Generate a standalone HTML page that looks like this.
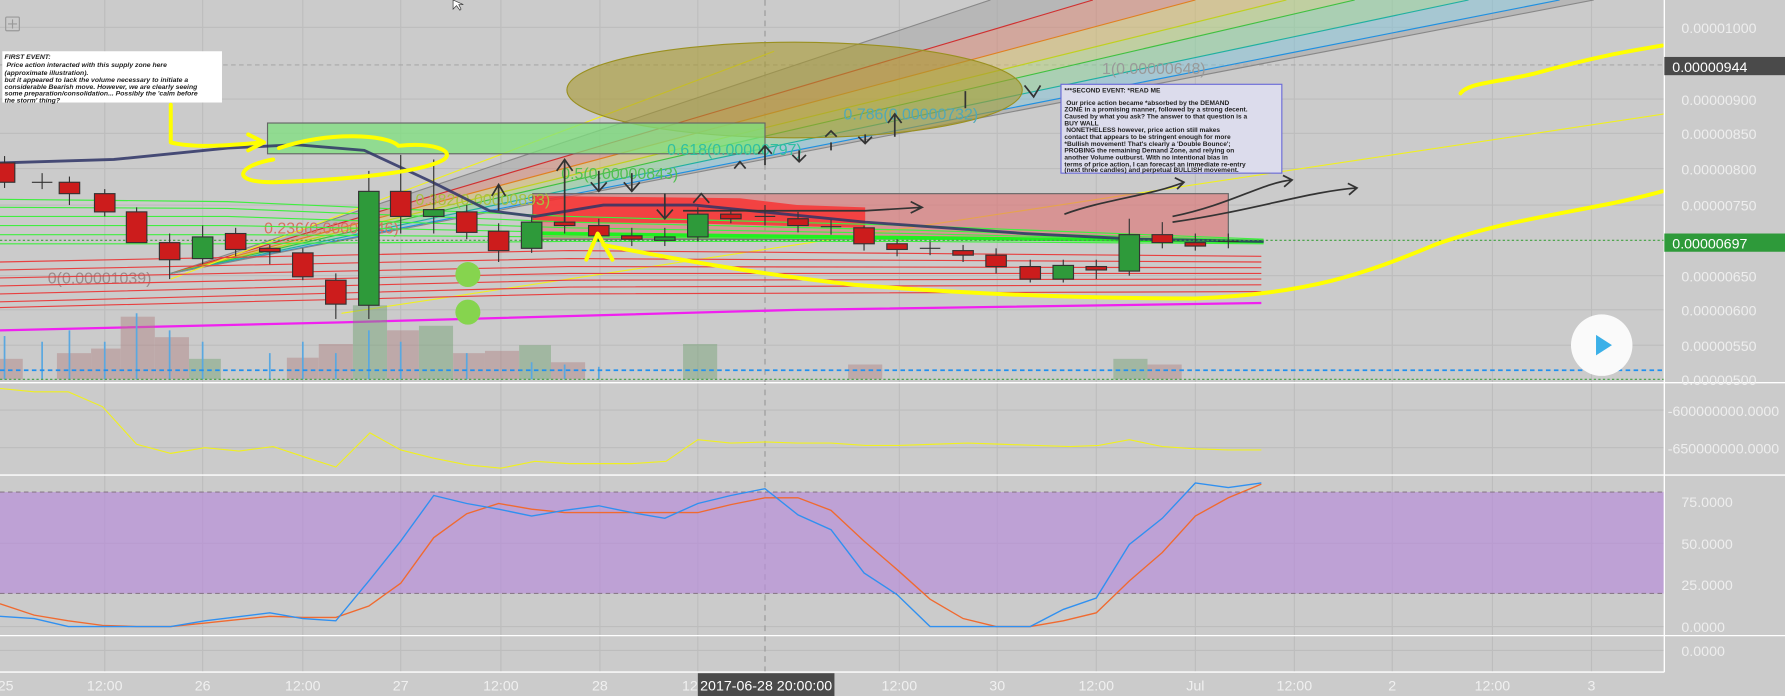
<!DOCTYPE html>
<html><head><meta charset="utf-8"><style>
html,body{margin:0;padding:0;background:#cbcbcb;overflow:hidden}
svg{display:block}
text{font-family:"Liberation Sans",sans-serif}
</style></head><body>
<svg width="1785" height="696" viewBox="0 0 1568 611" preserveAspectRatio="none" xmlns="http://www.w3.org/2000/svg">
<rect width="1568" height="611" fill="#cbcbcb"/>
<!-- grid -->
<g stroke="#bdbdbd" stroke-width="1">
<line x1="92" y1="0" x2="92" y2="590"/><line x1="178" y1="0" x2="178" y2="590"/><line x1="266" y1="0" x2="266" y2="590"/><line x1="352" y1="0" x2="352" y2="590"/><line x1="440" y1="0" x2="440" y2="590"/><line x1="527" y1="0" x2="527" y2="590"/><line x1="613" y1="0" x2="613" y2="590"/><line x1="790" y1="0" x2="790" y2="590"/><line x1="876" y1="0" x2="876" y2="590"/><line x1="963" y1="0" x2="963" y2="590"/><line x1="1050" y1="0" x2="1050" y2="590"/><line x1="1137" y1="0" x2="1137" y2="590"/><line x1="1223" y1="0" x2="1223" y2="590"/><line x1="1311" y1="0" x2="1311" y2="590"/><line x1="1398" y1="0" x2="1398" y2="590"/>
<line x1="0" y1="24" x2="1462" y2="24"/><line x1="0" y1="87" x2="1462" y2="87"/><line x1="0" y1="117" x2="1462" y2="117"/><line x1="0" y1="148" x2="1462" y2="148"/><line x1="0" y1="180" x2="1462" y2="180"/><line x1="0" y1="242" x2="1462" y2="242"/><line x1="0" y1="272" x2="1462" y2="272"/><line x1="0" y1="303" x2="1462" y2="303"/>
<line x1="0" y1="360" x2="1462" y2="360"/><line x1="0" y1="393" x2="1462" y2="393"/><line x1="0" y1="477" x2="1462" y2="477"/><line x1="0" y1="550" x2="1462" y2="550"/><line x1="0" y1="571" x2="1462" y2="571"/>
</g>
<line x1="0" y1="57" x2="1462" y2="57" stroke="#a8a8a8" stroke-dasharray="4,3"/>
<line x1="672" y1="0" x2="672" y2="590" stroke="#999" stroke-dasharray="5,4"/>
<!-- fib fan -->
<g opacity="0.55">
<polygon points="150,240 870,0 1400,0" fill="#a8a8a8"/>
<polygon points="150,240 960,0 1050,0" fill="#d88a78"/>
<polygon points="150,240 1050,0 1130,0" fill="#d8c070"/>
<polygon points="150,240 1130,0 1190,0" fill="#b8d480"/>
<polygon points="150,240 1190,0 1290,0" fill="#90d4a0"/>
<polygon points="150,240 1290,0 1370,0" fill="#88c4d8"/>
</g>
<g fill="none" stroke-width="1">
<line x1="150" y1="240" x2="870" y2="0" stroke="#888"/><line x1="150" y1="240" x2="960" y2="0" stroke="#d03030"/><line x1="150" y1="240" x2="1050" y2="0" stroke="#e08020"/><line x1="150" y1="240" x2="1130" y2="0" stroke="#c0d020"/><line x1="150" y1="240" x2="1190" y2="0" stroke="#40c040"/><line x1="150" y1="240" x2="1290" y2="0" stroke="#20b0a0"/><line x1="150" y1="240" x2="1370" y2="0" stroke="#2090e0"/><line x1="150" y1="240" x2="1400" y2="0" stroke="#888"/>
<line x1="300" y1="275" x2="1462" y2="100" stroke="#f0f020"/>
<line x1="150" y1="245" x2="680" y2="45" stroke="#f0f020"/>
</g>
<ellipse cx="698" cy="79" rx="200" ry="42" fill="#a89a30" fill-opacity="0.6" stroke="#9a9020"/>
<rect x="235" y="108" width="437" height="27" fill="#7ee07e" fill-opacity="0.75" stroke="#666"/>
<rect x="468" y="170" width="611" height="40" fill="#e07070" fill-opacity="0.6" stroke="#666"/>
<path d="M468,172 L650,174 L700,180 L760,182 L760,200 L600,196 L468,195 Z" fill="#ff2020" fill-opacity="0.7"/>
<g font-size="14">
<text x="42" y="249" fill="#9a8a8a">0(0.00001039)</text>
<text x="232" y="205" fill="#d87060">0.236(0.00000946)</text>
<text x="365" y="180" fill="#a8c040">0.382(0.00000893)</text>
<text x="493" y="157" fill="#50c050">0.5(0.00000843)</text>
<text x="586" y="136" fill="#30c0a0">0.618(0.00000797)</text>
<text x="741" y="105" fill="#50a8b8">0.786(0.00000732)</text>
<text x="968" y="65" fill="#999">1(0.00000648)</text>
</g>
<g fill="none" stroke="#40ee40" stroke-width="1">
<path d="M0,175 L200,177 L500,190 L800,198 L1110,210"/><path d="M0,182 L200,183 L500,195 L800,202 L1110,211"/><path d="M0,190 L200,190 L500,200 L800,205 L1110,212"/><path d="M0,198 L200,198 L500,204 L800,208 L1110,212"/><path d="M0,206 L200,206 L500,208 L800,210 L1110,213"/><path d="M0,214 L200,214 L500,212 L800,212 L1110,214"/>
</g>
<path d="M470,205 L1110,212" stroke="#20f020" stroke-width="3" fill="none"/>
<g fill="none" stroke="#e84040" stroke-width="1">
<path d="M0,230 L500,220 L1108,225"/><path d="M0,237 L500,227 L1108,230"/><path d="M0,244 L500,234 L1108,235"/><path d="M0,251 L500,240 L1108,240"/><path d="M0,258 L500,246 L1108,245"/><path d="M0,265 L500,252 L1108,250"/><path d="M0,270 L500,258 L1108,256"/>
</g>
<path d="M0,290 L300,283 L700,272 L1108,266" stroke="#f020f0" stroke-width="2" fill="none"/>
<path d="M0,143 L100,140 L200,130 L260,127 L320,132 L380,160 L430,185 L470,190 L530,180 L610,180 L660,185 L760,195 L900,205 L1000,210 L1110,212" stroke="#2e3466" stroke-width="2.5" fill="none" opacity="0.85"/>
<g opacity="0.45">
<rect x="0" y="315" width="20" height="18" fill="#b08080"/><rect x="50" y="310" width="30" height="23" fill="#b08080"/><rect x="80" y="306" width="26" height="27" fill="#b08080"/><rect x="106" y="278" width="30" height="55" fill="#b08080"/><rect x="136" y="296" width="30" height="37" fill="#b08080"/><rect x="166" y="315" width="28" height="18" fill="#70a070"/><rect x="252" y="314" width="28" height="19" fill="#b08080"/><rect x="280" y="302" width="30" height="31" fill="#b08080"/><rect x="310" y="268" width="30" height="65" fill="#70a070"/><rect x="340" y="290" width="28" height="43" fill="#b08080"/><rect x="368" y="286" width="30" height="47" fill="#70a070"/><rect x="398" y="310" width="28" height="23" fill="#b08080"/><rect x="426" y="308" width="30" height="25" fill="#b08080"/><rect x="456" y="303" width="28" height="30" fill="#70a070"/><rect x="484" y="318" width="30" height="15" fill="#b08080"/><rect x="600" y="302" width="30" height="31" fill="#70a070"/><rect x="745" y="320" width="30" height="13" fill="#b08080"/><rect x="978" y="315" width="30" height="18" fill="#70a070"/><rect x="1008" y="320" width="30" height="13" fill="#b08080"/>
</g>
<g stroke="#5aa8e0" stroke-width="1.5">
<line x1="4" y1="295" x2="4" y2="333"/><line x1="37" y1="300" x2="37" y2="333"/><line x1="61" y1="290" x2="61" y2="333"/><line x1="92" y1="300" x2="92" y2="333"/><line x1="120" y1="275" x2="120" y2="333"/><line x1="149" y1="290" x2="149" y2="333"/><line x1="178" y1="300" x2="178" y2="333"/><line x1="237" y1="310" x2="237" y2="333"/><line x1="266" y1="300" x2="266" y2="333"/><line x1="295" y1="310" x2="295" y2="333"/><line x1="324" y1="290" x2="324" y2="333"/><line x1="352" y1="300" x2="352" y2="333"/><line x1="410" y1="310" x2="410" y2="333"/><line x1="467" y1="318" x2="467" y2="333"/><line x1="496" y1="320" x2="496" y2="333"/><line x1="526" y1="322" x2="526" y2="333"/>
</g>
<line x1="0" y1="325" x2="1462" y2="325" stroke="#2090f0" stroke-width="1.5" stroke-dasharray="4,3"/>
<line x1="0" y1="333" x2="1462" y2="333" stroke="#40a040" stroke-dasharray="2,2"/>
<line x1="0" y1="211" x2="1462" y2="211" stroke="#40a040" stroke-dasharray="2,2"/>
<g stroke="#333" stroke-width="1">
<line x1="4" y1="137" x2="4" y2="165"/><rect x="-5" y="143" width="18" height="17" fill="#cc1c1c"/>
<line x1="37" y1="152" x2="37" y2="166"/><line x1="28" y1="160" x2="46" y2="160"/>
<line x1="61" y1="155" x2="61" y2="180"/><rect x="52" y="160" width="18" height="10" fill="#cc1c1c"/>
<line x1="92" y1="166" x2="92" y2="190"/><rect x="83" y="170" width="18" height="16" fill="#cc1c1c"/>
<line x1="120" y1="182" x2="120" y2="213"/><rect x="111" y="186" width="18" height="27" fill="#cc1c1c"/>
<line x1="149" y1="205" x2="149" y2="245"/><rect x="140" y="213" width="18" height="15" fill="#cc1c1c"/>
<line x1="178" y1="198" x2="178" y2="232"/><rect x="169" y="208" width="18" height="19" fill="#2e9a3a"/>
<line x1="207" y1="200" x2="207" y2="225"/><rect x="198" y="205" width="18" height="14" fill="#cc1c1c"/>
<line x1="237" y1="215" x2="237" y2="232"/><rect x="228" y="218" width="18" height="3" fill="#cc1c1c"/>
<line x1="266" y1="218" x2="266" y2="246"/><rect x="257" y="222" width="18" height="21" fill="#cc1c1c"/>
<line x1="295" y1="240" x2="295" y2="280"/><rect x="286" y="246" width="18" height="21" fill="#cc1c1c"/>
<line x1="324" y1="150" x2="324" y2="280"/><rect x="315" y="168" width="18" height="100" fill="#2e9a3a"/>
<line x1="352" y1="136" x2="352" y2="205"/><rect x="343" y="168" width="18" height="22" fill="#cc1c1c"/>
<line x1="381" y1="140" x2="381" y2="205"/><rect x="372" y="184" width="18" height="6" fill="#2e9a3a"/>
<line x1="410" y1="180" x2="410" y2="210"/><rect x="401" y="186" width="18" height="18" fill="#cc1c1c"/>
<line x1="438" y1="196" x2="438" y2="230"/><rect x="429" y="203" width="18" height="17" fill="#cc1c1c"/>
<line x1="467" y1="190" x2="467" y2="222"/><rect x="458" y="195" width="18" height="23" fill="#2e9a3a"/>
<line x1="496" y1="185" x2="496" y2="205"/><rect x="487" y="195" width="18" height="3" fill="#cc1c1c"/>
<line x1="526" y1="192" x2="526" y2="212"/><rect x="517" y="198" width="18" height="9" fill="#cc1c1c"/>
<line x1="555" y1="200" x2="555" y2="216"/><rect x="546" y="207" width="18" height="3" fill="#cc1c1c"/>
<line x1="584" y1="200" x2="584" y2="216"/><rect x="575" y="208" width="18" height="3" fill="#2e9a3a"/>
<line x1="613" y1="182" x2="613" y2="212"/><rect x="604" y="188" width="18" height="20" fill="#2e9a3a"/>
<line x1="642" y1="184" x2="642" y2="196"/><rect x="633" y="188" width="18" height="4" fill="#cc1c1c"/>
<line x1="672" y1="180" x2="672" y2="198"/><line x1="663" y1="190" x2="681" y2="190"/>
<line x1="701" y1="186" x2="701" y2="204"/><rect x="692" y="192" width="18" height="6" fill="#cc1c1c"/>
<line x1="730" y1="193" x2="730" y2="206"/><line x1="721" y1="199" x2="739" y2="199"/>
<line x1="759" y1="198" x2="759" y2="220"/><rect x="750" y="200" width="18" height="14" fill="#cc1c1c"/>
<line x1="788" y1="210" x2="788" y2="225"/><rect x="779" y="214" width="18" height="5" fill="#cc1c1c"/>
<line x1="817" y1="212" x2="817" y2="224"/><line x1="808" y1="218" x2="826" y2="218"/>
<line x1="846" y1="215" x2="846" y2="230"/><rect x="837" y="220" width="18" height="4" fill="#cc1c1c"/>
<line x1="875" y1="218" x2="875" y2="240"/><rect x="866" y="224" width="18" height="10" fill="#cc1c1c"/>
<line x1="905" y1="228" x2="905" y2="248"/><rect x="896" y="234" width="18" height="11" fill="#cc1c1c"/>
<line x1="934" y1="228" x2="934" y2="248"/><rect x="925" y="233" width="18" height="12" fill="#2e9a3a"/>
<line x1="963" y1="228" x2="963" y2="245"/><rect x="954" y="234" width="18" height="3" fill="#cc1c1c"/>
<line x1="992" y1="192" x2="992" y2="242"/><rect x="983" y="206" width="18" height="32" fill="#2e9a3a"/>
<line x1="1021" y1="195" x2="1021" y2="218"/><rect x="1012" y="206" width="18" height="7" fill="#cc1c1c"/>
<line x1="1050" y1="205" x2="1050" y2="220"/><rect x="1041" y="213" width="18" height="3" fill="#cc1c1c"/>
<line x1="1079" y1="205" x2="1079" y2="218"/><line x1="1070" y1="212" x2="1088" y2="212"/>
</g>
<g fill="none" stroke="#333" stroke-width="1.5">
<path d="M496,195 V140 M489,150 L496,140 L503,150"/><path d="M438,185 V162 M432,172 L438,162 L444,172"/>
<path d="M526,150 V168 M519,160 L526,168 L533,160"/><path d="M555,152 V168 M548,160 L555,168 L562,160"/>
<path d="M584,170 V192 M577,184 L584,192 L591,184"/><path d="M609,178 L616,170 L623,178"/>
<path d="M645,148 L650,142 L655,148 M672,145 V128 M666,135 L672,128 L678,135"/>
<path d="M702,132 V142 M696,136 L702,142 L708,136"/><path d="M730,125 V132 M725,120 L730,115 L735,120"/>
<path d="M760,118 V126 M754,120 L760,126 L766,120"/><path d="M786,100 V120 M780,108 L786,100 L792,108"/>
<path d="M848,80 V95"/><path d="M900,75 L908,85 L914,75"/>
<path d="M600,185 L760,185 L810,182 M800,177 L810,182 L800,187"/>
<path d="M935,188 C970,175 1010,172 1040,160 M1032,156 L1040,160 L1034,166"/>
<path d="M1030,190 C1080,180 1110,160 1135,158 M1127,154 L1135,158 L1128,164"/>
<path d="M1030,195 C1100,185 1150,168 1192,165 M1184,161 L1192,165 L1185,171"/>
</g>
<g fill="none" stroke="#ffff00" stroke-width="3.5" stroke-linecap="round" stroke-linejoin="round">
<path d="M150,92 L150,125 C170,130 200,128 230,125 M218,118 L232,125 L218,132"/>
<path d="M245,130 C290,115 340,118 350,128 C380,125 400,132 390,140 C370,152 300,158 240,160 C200,160 210,145 240,140"/>
<path d="M515,228 L525,205 L538,228 M530,215 C580,225 660,240 750,250 C850,258 950,262 1050,262 C1150,258 1200,240 1260,215 C1330,190 1400,185 1460,168"/>
<path d="M1283,82 C1290,72 1320,72 1350,64 C1400,50 1430,45 1460,40"/>
</g>
<circle cx="411" cy="241" r="11" fill="#86d44e"/><circle cx="411" cy="274" r="11" fill="#86d44e"/>
<rect x="2" y="45" width="193" height="45" fill="#fff"/>
<text font-size="6" font-style="italic" font-weight="bold" fill="#222"><tspan x="4" y="52">FIRST EVENT:</tspan><tspan x="4" y="59">       Price action interacted with this supply zone here</tspan><tspan x="4" y="66">(approximate illustration).</tspan><tspan x="4" y="72">but it appeared to lack the volume necessary to initiate a</tspan><tspan x="4" y="78">considerable Bearish move. However, we are clearly seeing</tspan><tspan x="4" y="84">some preparation/consolidation... Possibly the 'calm before</tspan><tspan x="4" y="90">the storm' thing?</tspan></text>
<rect x="932" y="74" width="194" height="78" fill="#dcdcec" stroke="#6a6ad8"/>
<text font-size="5.8" font-weight="bold" fill="#222"><tspan x="935" y="81">***SECOND EVENT:     *READ ME</tspan><tspan x="935" y="92">              Our price action became *absorbed by the DEMAND</tspan><tspan x="935" y="98">ZONE in a promising manner, followed by a strong decent.</tspan><tspan x="935" y="104">Caused by what you ask? The answer to that question is a</tspan><tspan x="935" y="110">BUY WALL</tspan><tspan x="935" y="116">              NONETHELESS however, price action still makes</tspan><tspan x="935" y="122">contact that appears to be stringent enough for more</tspan><tspan x="935" y="128">*Bullish movement! That's clearly a 'Double Bounce';</tspan><tspan x="935" y="134">PROBING the remaining Demand Zone, and relying on</tspan><tspan x="935" y="140">another Volume outburst. With no intentional bias in</tspan><tspan x="935" y="146">terms of price action, I can forecast an immediate re-entry</tspan><tspan x="935" y="151">(next three candles) and perpetual BULLISH movement.</tspan></text>
<rect x="5" y="15" width="12" height="12" fill="none" stroke="#999" rx="1"/><path d="M11,17 V25 M7,21 H15" stroke="#999"/>
<!-- pane 2 -->
<polyline fill="none" stroke="#f0f020" stroke-width="1" points="0,341 30,344 60,344 90,357 120,390 150,398 180,393 210,396 240,392 270,402 295,410 325,380 352,395 380,402 410,408 440,411 470,405 500,407 530,407 555,407 585,405 613,386 642,389 672,388 700,389 730,389 760,391 790,391 820,390 850,389 880,390 910,391 940,392 965,391 992,386 1021,392 1050,394 1079,395 1108,395"/>
<!-- pane 3 -->
<rect x="0" y="432" width="1462" height="89" fill="#b88ed8" fill-opacity="0.7"/>
<line x1="0" y1="432" x2="1462" y2="432" stroke="#8a7a8a" stroke-dasharray="4,3"/>
<line x1="0" y1="521" x2="1462" y2="521" stroke="#8a7a8a" stroke-dasharray="4,3"/>
<polyline fill="none" stroke="#f06a30" stroke-width="1.2" points="0,530 30,540 60,545 90,549 120,550 150,550 180,547 237,541 266,542 295,542 324,532 352,512 381,472 410,451 438,442 467,447 496,450 526,450 555,450 584,450 613,450 642,443 672,437 701,437 730,448 759,475 788,500 817,526 846,543 875,550 905,550 934,545 963,538 992,510 1021,485 1050,453 1079,437 1108,425"/>
<polyline fill="none" stroke="#3090f0" stroke-width="1.2" points="0,541 30,543 60,550 90,550 120,550 150,550 180,545 237,538 266,543 295,545 324,510 352,475 381,435 410,442 438,447 467,453 496,448 526,444 555,450 584,455 613,442 642,435 672,429 701,452 730,465 759,503 788,522 817,550 846,550 875,550 905,550 934,535 963,525 992,478 1021,455 1050,424 1079,428 1108,424"/>
<g stroke="#fff" stroke-width="1.2">
<line x1="0" y1="336" x2="1568" y2="336"/><line x1="0" y1="417" x2="1568" y2="417"/><line x1="0" y1="558" x2="1568" y2="558"/><line x1="0" y1="590" x2="1462" y2="590"/><line x1="1462" y1="0" x2="1462" y2="590"/>
</g>
<g font-size="12.5" fill="#eeeeee">
<text x="1477" y="29">0.00001000</text><text x="1477" y="92">0.00000900</text><text x="1477" y="122">0.00000850</text><text x="1477" y="153">0.00000800</text><text x="1477" y="185">0.00000750</text><text x="1477" y="247">0.00000650</text><text x="1477" y="277">0.00000600</text><text x="1477" y="308">0.00000550</text><text x="1477" y="338">0.00000500</text>
<text x="1465" y="365">-600000000.0000</text><text x="1465" y="398">-650000000.0000</text>
<text x="1477" y="445">75.0000</text><text x="1477" y="482">50.0000</text><text x="1477" y="518">25.0000</text><text x="1477" y="555">0.0000</text><text x="1477" y="576">0.0000</text>
</g>
<rect x="1462" y="50" width="106" height="16" fill="#4a4a4a"/><text x="1469" y="63" font-size="12.5" fill="#fff">0.00000944</text>
<rect x="1462" y="205" width="106" height="16" fill="#2e9a3a"/><text x="1469" y="218" font-size="12.5" fill="#fff">0.00000697</text>
<circle cx="1407" cy="303" r="27" fill="#fafafa"/><path d="M1402,294 L1416,303 L1402,312 Z" fill="#3bb0e8"/>
<g font-size="12.5" fill="#f0f0f0" text-anchor="middle">
<text x="5" y="606">25</text><text x="92" y="606">12:00</text><text x="178" y="606">26</text><text x="266" y="606">12:00</text><text x="352" y="606">27</text><text x="440" y="606">12:00</text><text x="527" y="606">28</text><text x="606" y="606">12</text><text x="790" y="606">12:00</text><text x="876" y="606">30</text><text x="963" y="606">12:00</text><text x="1050" y="606">Jul</text><text x="1137" y="606">12:00</text><text x="1223" y="606">2</text><text x="1311" y="606">12:00</text><text x="1398" y="606">3</text>
</g>
<rect x="613" y="591" width="120" height="20" fill="#4a4a4a"/><text x="673" y="606" font-size="12.5" fill="#fff" text-anchor="middle">2017-06-28 20:00:00</text>
<path d="M398,0 L398,8 L401,5 L404,9 L405,8 L403,4 L407,4 Z" fill="#fff" stroke="#333" stroke-width="0.6"/>
</svg>
</body></html>
